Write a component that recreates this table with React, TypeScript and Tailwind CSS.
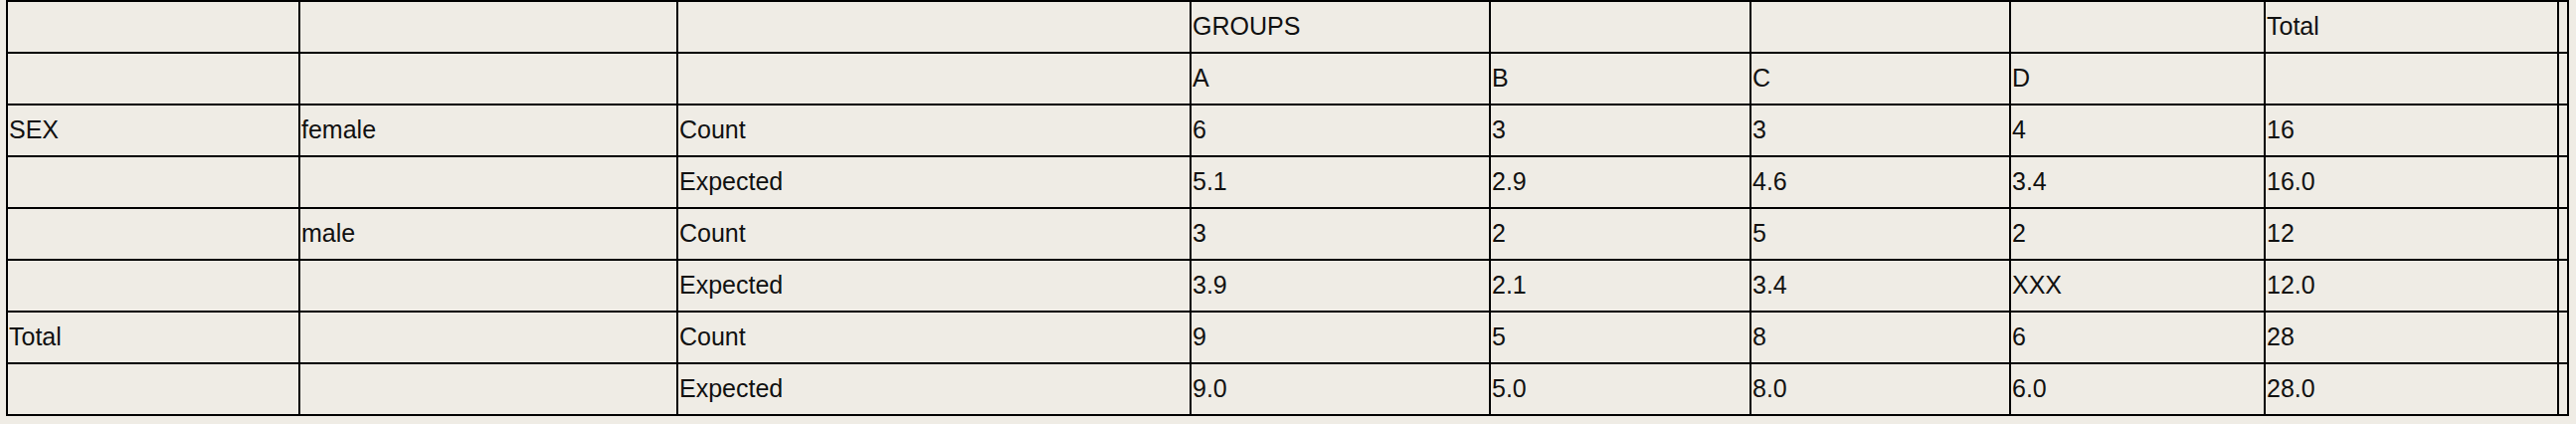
const rows: string[][] = [
  ['', '', '', 'GROUPS', '', '', '', 'Total', ''],
  ['', '', '', 'A', 'B', 'C', 'D', '', ''],
  ['SEX', 'female', 'Count', '6', '3', '3', '4', '16', ''],
  ['', '', 'Expected', '5.1', '2.9', '4.6', '3.4', '16.0', ''],
  ['', 'male', 'Count', '3', '2', '5', '2', '12', ''],
  ['', '', 'Expected', '3.9', '2.1', '3.4', 'XXX', '12.0', ''],
  ['Total', '', 'Count', '9', '5', '8', '6', '28', ''],
  ['', '', 'Expected', '9.0', '5.0', '8.0', '6.0', '28.0', ''],
];

export default function App() {
  return (
    <div className="min-h-screen bg-[#efece5] font-['Liberation_Sans',Arial,sans-serif] text-[25px] text-[#111]">
      <div className="ml-[6px] grid w-fit grid-cols-[292px_378px_514px_299px_260px_259px_254px_293px_8px] gap-[2px] bg-black p-[2px]">
        {rows.map((row, r) =>
          row.map((cell, c) => (
            <div
              key={`${r}-${c}`}
              className="flex h-[50px] items-center overflow-hidden whitespace-nowrap bg-[#efece5] pl-px"
            >
              {cell}
            </div>
          ))
        )}
      </div>
    </div>
  );
}
